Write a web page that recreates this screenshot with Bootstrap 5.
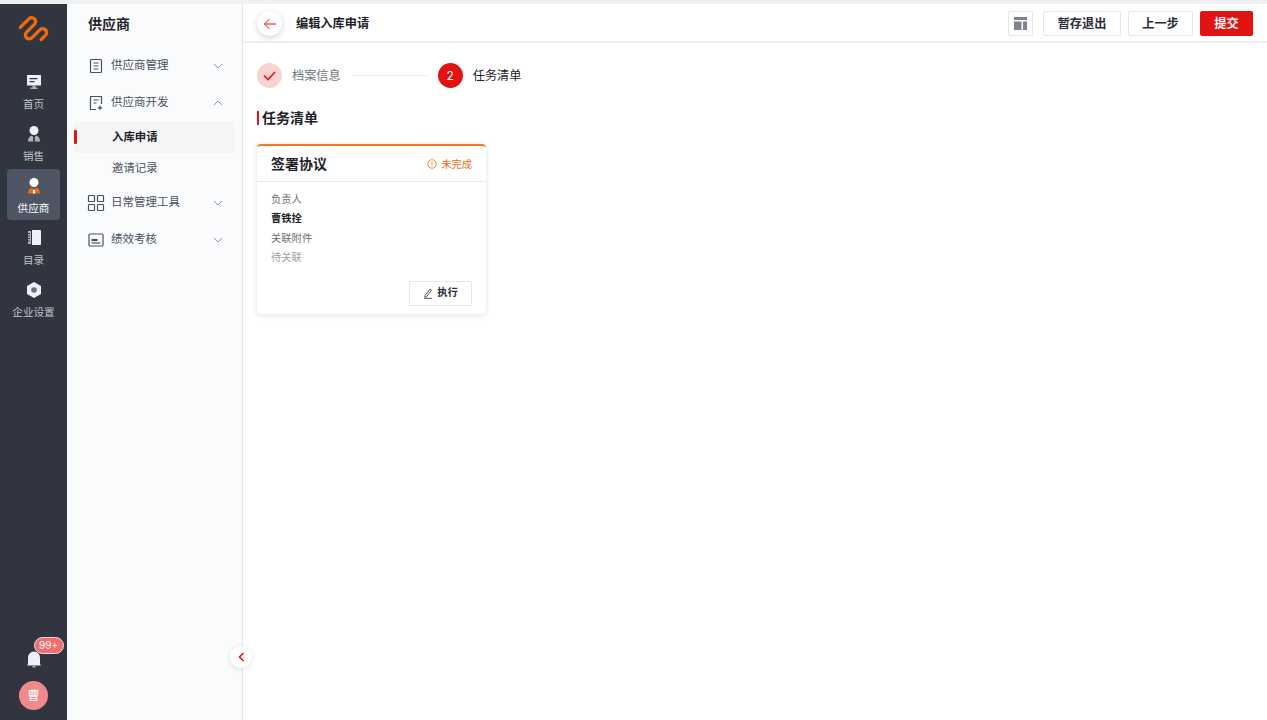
<!doctype html>
<html lang="zh">
<head>
<meta charset="utf-8">
<title>编辑入库申请</title>
<link href="https://cdn.jsdelivr.net/npm/bootstrap@5.3.0/dist/css/bootstrap.min.css" rel="stylesheet">
<style>
html,body{height:100%;overflow:hidden}
body{font-family:Inter,"Noto Sans CJK SC",sans-serif;color:#1f2329;background:#fff}
.top-strip{height:4px;background:#eff0f2}
.shell{height:716px}
.rail{width:67px;background:#30353f;color:#c0c3c9}
.rail-logo{height:61px;padding-top:8px}
.rail-item{height:52px;width:53px;font-size:10.6px;line-height:13px;padding-top:8px;margin:0 7px;border-radius:4px}
.rail-item svg{display:block;margin-bottom:7px}
.rail-item.is-on{background:#4e5564;color:#fff;height:51px;margin-bottom:1px}
.rail-wide{white-space:nowrap}
.bell-wrap{width:30px;height:24px;margin-bottom:13px}
.bell-wrap svg{margin-top:7px}
.bell-count{position:absolute;left:15px;top:-7px;background:#f56c6c;border:1px solid #dfe1e6;color:#fff;font-size:10px;line-height:15px;height:17px;width:30px;border-radius:9px;text-align:center}
.avatar{width:29px;height:29px;border-radius:50%;background:#f08a8a;color:#fff;font-size:12px;margin-bottom:10px}
.side{width:176px;background:#fafbfd;border-right:1px solid #e4e6eb;position:relative}
.side-title{font-size:14px;font-weight:600;line-height:20px;padding:10px 0 0 21px;height:43px;color:#1f2329}
.menu-row{height:37px;font-size:11.5px;color:#4a5160;padding:0 19px 0 20px}
.menu-row svg.ic{flex:none;width:18px;height:18px;margin-right:6px}
.menu-row .grow{flex:1}
.sub-row{height:31px;font-size:11.4px;margin:0 7px;padding-left:38px;color:#4a5160;border-radius:4px;position:relative;line-height:31px}
.sub-row.is-on{height:32px;line-height:32px;background:#f4f5f6;color:#1f2329;font-weight:600}
.sub-row.is-on::before{content:"";position:absolute;left:0;top:9px;width:3px;height:14px;background:#e31313;border-radius:1px}
.collapse-btn{position:absolute;right:-10px;top:642px;width:22px;height:22px;border-radius:50%;background:#fff;box-shadow:0 1px 5px rgba(0,0,0,.12)}
.page-head{height:39px;border-bottom:2px solid #eeeff2;padding:2px 14px 0}
.round-back{width:25px;height:25px;border-radius:50%;background:#fff;box-shadow:0 2px 6px rgba(0,0,0,.18);margin-right:14px}
.head-title{font-size:12.2px;font-weight:600;color:#1f2329;padding-top:1px}
.act{height:25px;background:#fff;border:1px solid #e4e6eb;border-radius:2px;font-size:12.2px;font-weight:600;color:#2a2e36;line-height:23px;text-align:center;padding:0}
.act-icon{width:25px;margin-right:10px}
.act-a{width:78px;margin-right:7px}
.act-b{width:65px;margin-right:7px}
.act-c{width:53px;background:#e31313;border-color:#e31313;color:#fff}
.page-body{padding:20px 14px 0}
.step-dot{width:25px;height:25px;border-radius:50%;font-size:12px;flex:none}
.step-done{background:#f9d2d2}
.step-now{background:#e31313;color:#fff;font-weight:400}
.step-text{font-size:12.2px;margin-left:10px;padding-top:1px}
.step-line{width:75px;height:1px;background:#e4e6eb;margin:0 11px}
.sec-title{font-size:14px;font-weight:600;line-height:16px;border-left:2px solid #e31313;padding-left:3px;margin:23px 0 19px;height:14px;display:flex;align-items:center}
.task{width:229px;height:170px;border-radius:4px;border-top:2px solid #f47a2b;background:#fff;box-shadow:0 1px 6px rgba(0,0,0,.13)}
.task-head{height:36px;border-bottom:1px solid #e8e9ed;padding:0 14px}
.task-name{font-size:14px;font-weight:600;color:#1f2329}
.task-state{font-size:10.2px;color:#f2691a;padding-top:2px}
.task-body{padding:8px 14px 0;font-size:10.3px;line-height:19.4px;color:#6a6f78}
.task-body .who{color:#1f2329;font-weight:600}
.task-body .wait{color:#9b9fa6}
.task-foot{padding:0 14px;margin-top:13px}
.run-btn{width:63px;height:25px;border:1px solid #e4e6eb;background:#fff;font-size:10.3px;font-weight:600;color:#2a2e36;padding:0;border-radius:1px}
</style>
</head>
<body>
<div class="top-strip"></div>
<div class="shell d-flex">
  <nav class="rail d-flex flex-column align-items-center flex-shrink-0">
    <div class="rail-logo d-flex justify-content-center w-100">
      <svg width="33" height="33" viewBox="0 0 30 30" fill="none" stroke="#f26a0f" stroke-width="3" stroke-linecap="round"><path d="M3 14 11 6A3.540 3.540 0 0 1 16 11L8.500 18.500A3.540 3.540 0 0 0 13.500 23.500L21 16A3.540 3.540 0 0 1 26 21L22 25"/></svg>
    </div>
    <div class="rail-item d-flex flex-column align-items-center">
      <svg width="18" height="18" viewBox="0 0 18 18"><path fill="#eef0f3" d="M2 2h14v10.500H2z"/><path fill="#30353f" d="M4.500 5h8v1.300h-8zM4.500 8h5v1.300h-5z"/><path fill="#aeb2ba" d="M7.500 12.500h3V14.500h-3zM5.500 14.500h7V16h-7z"/></svg>首页
    </div>
    <div class="rail-item d-flex flex-column align-items-center">
      <svg width="18" height="18" viewBox="0 0 18 18"><circle cx="9" cy="5.500" r="4.500" fill="#eef0f3"/><path fill="#aeb2ba" d="M3 16.500c0-3.500 1.500-5.500 4-6L9 13.500l2-3c2.500.5 4 2.500 4 6z"/><path fill="#30353f" d="M8.300 12.500h1.400l.5 4H7.800z"/></svg>销售
    </div>
    <div class="rail-item is-on d-flex flex-column align-items-center">
      <svg width="18" height="18" viewBox="0 0 18 18"><circle cx="9" cy="5.500" r="4.500" fill="#fff"/><path fill="#f26a0f" d="M3 16.500c0-3.500 1.500-5.500 4-6L9 13.500l2-3c2.500.5 4 2.500 4 6z"/><path fill="#fff" d="M8.300 12.500h1.400l.5 4H7.800z"/></svg>供应商
    </div>
    <div class="rail-item d-flex flex-column align-items-center">
      <svg width="18" height="18" viewBox="0 0 18 18"><path fill="#eef0f3" d="M7 1h8a1 1 0 0 1 1 1v13a1 1 0 0 1-1 1H7z"/><path fill="#aeb2ba" d="M3 2h3v13H3z"/><path fill="#30353f" d="M2 4h3v1H2zM2 6.500h3v1H2zM2 9h3v1H2zM2 11.500h3v1H2z"/></svg>目录
    </div>
    <div class="rail-item d-flex flex-column align-items-center rail-wide">
      <svg width="18" height="18" viewBox="0 0 18 18"><path fill="#eef0f3" d="M9 1l7 4v8l-7 4-7-4V5z"/><circle cx="9" cy="9" r="2.800" fill="#6d7079"/></svg>企业设置
    </div>
    <div class="mt-auto d-flex flex-column align-items-center">
      <div class="bell-wrap position-relative d-flex justify-content-center">
        <svg width="14" height="17" viewBox="0 0 14 17"><path fill="#eef0f3" d="M1 13V6.500a6 6 0 0 1 12 0V13l1 1.500H0z"/><path fill="#aeb2ba" d="M5.500 15h3v1.500h-3z"/></svg>
        <span class="bell-count">99+</span>
      </div>
      <div class="avatar d-flex align-items-center justify-content-center">曹</div>
    </div>
  </nav>
  <aside class="side flex-shrink-0">
    <div class="side-title">供应商</div>
    <div class="menu-row d-flex align-items-center">
      <svg class="ic" viewBox="0 0 18 18" fill="none" stroke="#4a5160" stroke-width="1.200"><rect x="3.500" y="2.500" width="11" height="13" rx="1"/><path d="M6.500 6h5M6.500 9h5M6.500 12h5"/></svg>
      <span class="grow">供应商管理</span>
      <svg width="10" height="6" viewBox="0 0 10 6" fill="none" stroke="#8d929b"><path d="M1 1l4 4 4-4"/></svg>
    </div>
    <div class="menu-row d-flex align-items-center">
      <svg class="ic" viewBox="0 0 18 18" fill="none" stroke="#4a5160" stroke-width="1.200"><path d="M9 15.500H3.500v-13h11V10"/><path d="M6.500 6h5M6.500 9h3M13 11.500v4.500M10.800 13.800h4.500"/></svg>
      <span class="grow">供应商开发</span>
      <svg width="10" height="6" viewBox="0 0 10 6" fill="none" stroke="#8d929b"><path d="M1 5l4-4 4 4"/></svg>
    </div>
    <div class="sub-row is-on">入库申请</div>
    <div class="sub-row">邀请记录</div>
    <div class="menu-row d-flex align-items-center">
      <svg class="ic" viewBox="0 0 18 18" fill="none" stroke="#4a5160" stroke-width="1.200"><rect x="1.500" y="1.500" width="6" height="6" rx=".5"/><rect x="10.500" y="1.500" width="6" height="6" rx=".5"/><rect x="1.500" y="10.500" width="6" height="6" rx=".5"/><rect x="10.500" y="10.500" width="6" height="6" rx=".5"/></svg>
      <span class="grow">日常管理工具</span>
      <svg width="10" height="6" viewBox="0 0 10 6" fill="none" stroke="#8d929b"><path d="M1 1l4 4 4-4"/></svg>
    </div>
    <div class="menu-row d-flex align-items-center">
      <svg class="ic" viewBox="0 0 18 18" fill="none" stroke="#4a5160" stroke-width="1.200"><rect x="2" y="3" width="14" height="12" rx="1"/><path stroke-width="2.200" d="M4.500 9h6"/><path d="M4.500 12h9"/></svg>
      <span class="grow">绩效考核</span>
      <svg width="10" height="6" viewBox="0 0 10 6" fill="none" stroke="#8d929b"><path d="M1 1l4 4 4-4"/></svg>
    </div>
    <div class="collapse-btn d-flex align-items-center justify-content-center">
      <svg width="7" height="10" viewBox="0 0 7 10" fill="none" stroke="#e31313" stroke-width="1.600"><path d="M5.500 1l-4 4 4 4"/></svg>
    </div>
  </aside>
  <main class="flex-grow-1">
    <header class="page-head d-flex align-items-center">
      <div class="round-back d-flex align-items-center justify-content-center">
        <svg width="14" height="12" viewBox="0 0 14 12" fill="none" stroke="#e31313" stroke-width="1"><path d="M13 6H1.500M6.500 1l-5 5 5 5"/></svg>
      </div>
      <span class="head-title">编辑入库申请</span>
      <div class="ms-auto d-flex align-items-center">
        <button class="act act-icon d-flex align-items-center justify-content-center" aria-label="布局">
          <svg width="13" height="13" viewBox="0 0 13 13" fill="#7d8490"><path d="M0 0h13v3H0zM0 4.500h7.500V13H0zM9 4.500h4V13H9z"/></svg>
        </button>
        <button class="act act-a">暂存退出</button>
        <button class="act act-b">上一步</button>
        <button class="act act-c">提交</button>
      </div>
    </header>
    <section class="page-body">
      <div class="d-flex align-items-center">
        <span class="step-dot step-done d-flex align-items-center justify-content-center">
          <svg width="13" height="10" viewBox="0 0 13 10" fill="none" stroke="#e31313" stroke-width="1.600"><path d="M1 4.500l4 4 7-7.500"/></svg>
        </span>
        <span class="step-text text-secondary">档案信息</span>
        <span class="step-line"></span>
        <span class="step-dot step-now d-flex align-items-center justify-content-center">2</span>
        <span class="step-text">任务清单</span>
      </div>
      <h2 class="sec-title">任务清单</h2>
      <div class="task">
        <div class="task-head d-flex align-items-center justify-content-between">
          <span class="task-name">签署协议</span>
          <span class="task-state d-flex align-items-center gap-1">
            <svg width="10" height="10" viewBox="0 0 10 10" fill="none" stroke="#f2691a" stroke-width=".8"><circle cx="5" cy="5" r="4.300"/><path d="M5 2.500v3.200M5 6.800v.8"/></svg>未完成
          </span>
        </div>
        <div class="task-body">
          <div>负责人</div>
          <div class="who">曹铁拴</div>
          <div>关联附件</div>
          <div class="wait">待关联</div>
        </div>
        <div class="task-foot d-flex justify-content-end">
          <button class="run-btn d-flex align-items-center justify-content-center gap-1">
            <svg width="10" height="11" viewBox="0 0 10 11" fill="none" stroke="#2a2e36" stroke-width=".8"><path d="M2 7.500 7 1l1.500 1.200-5 6.500-1.700.5zM1 10.300h8"/></svg>执行
          </button>
        </div>
      </div>
    </section>
  </main>
</div>
<script src="https://cdn.jsdelivr.net/npm/bootstrap@5.3.0/dist/js/bootstrap.bundle.min.js"></script>
</body>
</html>
